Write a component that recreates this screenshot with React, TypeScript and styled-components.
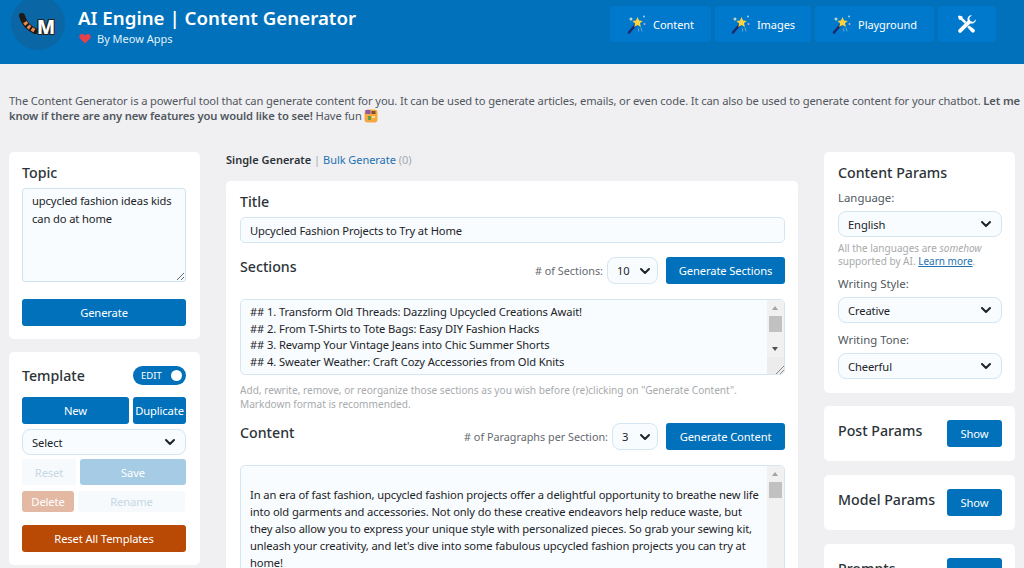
import { createGlobalStyle, styled } from "styled-components";

const GlobalStyle = createGlobalStyle`
  html, body {
    margin: 0;
    height: 568px;
    overflow: hidden;
    background: #f0f0f3;
    font-family: "Noto Sans", "Open Sans", sans-serif;
    font-size: 11.2px;
    letter-spacing: -0.12px;
    color: #1d2327;
  }
  * { box-sizing: border-box; }
`;

const Header = styled.header`
  height: 64px;
  background: #0071ba;
  display: flex;
  justify-content: space-between;
  padding: 0 28px 0 11px;
`;

const Brand = styled.div`
  display: flex;
  gap: 13px;
`;

const LogoCircle = styled.div`
  position: relative;
  width: 54px;
  height: 54px;
  margin-top: -4px;
  border-radius: 50%;
  background: #0a66a5;
  overflow: hidden;
`;

const LogoLetter = styled.span`
  position: absolute;
  left: 26px;
  top: 19px;
  font-size: 19px;
  font-weight: 800;
  line-height: 24px;
  letter-spacing: 0;
  color: #fff;
  text-shadow: 1px 1px 0 #222, -1px -1px 0 #222, 1px -1px 0 #222, -1px 1px 0 #222;
`;

const BrandText = styled.div`
  padding-top: 6px;
`;

const AppTitle = styled.h1`
  margin: 0;
  font-size: 18.7px;
  line-height: 23px;
  font-weight: 600;
  letter-spacing: 0;
  color: #fff;
`;

const Byline = styled.div`
  display: flex;
  align-items: center;
  gap: 6px;
  margin-top: 2px;
  padding-left: 1px;
  font-size: 11px;
  letter-spacing: 0;
  color: #e3f1fb;
`;

const Nav = styled.nav`
  display: flex;
  gap: 4px;
  padding-top: 6px;
`;

const NavButton = styled.button<{ $width: number }>`
  width: ${(p) => p.$width}px;
  height: 36px;
  border: 0;
  border-radius: 4px;
  background: #0079cc;
  color: #fff;
  font: inherit;
  font-size: 11px;
  letter-spacing: -0.05px;
  display: flex;
  align-items: center;
  justify-content: center;
  gap: 6px;
`;

const Intro = styled.p`
  margin: 0;
  padding: 29px 0 0 9px;
  height: 88px;
  line-height: 15px;
  color: #50575e;
  b {
    font-weight: 600;
  }
  svg {
    vertical-align: -3px;
  }
`;

const Columns = styled.main`
  display: grid;
  grid-template-columns: 191px 572px 191px;
  gap: 26px;
  padding-left: 9px;
`;

const Column = styled.div`
  display: flex;
  flex-direction: column;
  gap: 13px;
`;

const Card = styled.section`
  background: #fff;
  border-radius: 5px;
  padding: 12px 13px 13px 14px;
`;

const LeftCard = styled(Card)`
  padding: 12px 14px 13px 13px;
`;

const TemplateCard = styled(LeftCard)`
  padding-top: 14px;
`;

const ParamsCard = styled(Card)`
  padding-bottom: 14px;
`;

const CardTitle = styled.h2`
  margin: 0;
  font-size: 14.2px;
  line-height: 18px;
  font-weight: 500;
  letter-spacing: 0;
  color: #2c3338;
`;

const RaisedTitle = styled(CardTitle)`
  margin-top: -8px;
`;

const ParamsTitle = styled(CardTitle)`
  margin-bottom: 0;
`;

const Input = styled.div`
  height: 26px;
  border: 1px solid #d4e6f1;
  border-radius: 5px;
  background: #f8fcff;
  padding: 0 9px;
  display: flex;
  align-items: center;
  color: #1d2327;
`;

const SelectBox = styled(Input)<{ $width?: number }>`
  justify-content: space-between;
  border-radius: 8px;
  ${(p) => (p.$width ? `width: ${p.$width}px;` : "")}
`;

const Button = styled.button<{ $tone?: "primary" | "danger" }>`
  height: 27px;
  border: 0;
  border-radius: 3px;
  padding: 0;
  background: ${(p) => (p.$tone === "danger" ? "#b84a05" : "#0071ba")};
  color: #fff;
  font: inherit;
  letter-spacing: inherit;
`;

const TopicArea = styled.textarea`
  display: block;
  width: 164px;
  height: 94px;
  margin: 6px 0 17px;
  padding: 3px 9px;
  border: 1px solid #cfe3f0;
  border-radius: 3px;
  background: #f8fcff;
  font: inherit;
  letter-spacing: inherit;
  line-height: 18px;
  color: #1d2327;
  outline: 0;
`;

const WideButton = styled(Button)`
  display: block;
  width: 100%;
`;

const TemplateHead = styled.div`
  display: flex;
  justify-content: space-between;
  align-items: center;
  margin-bottom: 12px;
`;

const Toggle = styled.div`
  width: 53px;
  height: 19px;
  border-radius: 10px;
  background: #0071ba;
  color: #fff;
  font-size: 9.5px;
  letter-spacing: 0;
  display: flex;
  align-items: center;
  justify-content: space-between;
  padding: 0 4px 0 8px;
  &::after {
    content: "";
    width: 11px;
    height: 11px;
    border-radius: 50%;
    background: #fff;
  }
`;

const ButtonRow = styled.div<{ $columns: string; $after?: number }>`
  display: grid;
  grid-template-columns: ${(p) => p.$columns};
  gap: 4px;
  margin-bottom: ${(p) => p.$after ?? 5}px;
`;

const FadedButton = styled.button<{ $kind: "ghost" | "primary" | "danger"; $height?: number }>`
  height: ${(p) => p.$height ?? 26}px;
  border: 0;
  border-radius: 3px;
  padding: 0;
  font: inherit;
  letter-spacing: inherit;
  background: ${(p) =>
    p.$kind === "primary" ? "#a6cce5" : p.$kind === "danger" ? "#e4b9a3" : "#f6fafd"};
  color: ${(p) => (p.$kind === "ghost" ? "#c6d8e4" : "#fff")};
`;

const GenerateTabs = styled.div`
  height: 29px;
  font-size: 11px;
  letter-spacing: 0;
  line-height: 16px;
  color: #a7aaad;
  b {
    font-weight: 600;
    color: #2c3338;
  }
  a {
    color: #2271b1;
    letter-spacing: -0.05px;
  }
`;

const MainCard = styled(Card)`
  height: 420px;
  overflow: hidden;
`;

const SectionHead = styled.div`
  display: flex;
  align-items: center;
  justify-content: space-between;
  height: 27px;
`;

const Controls = styled.div`
  display: flex;
  align-items: center;
`;

const ControlLabel = styled.span`
  font-size: 10.8px;
  letter-spacing: 0;
  color: #646970;
  margin-right: 4px;
`;

const CompactSelect = styled(SelectBox)`
  height: 27px;
  margin-right: 8px;
  padding: 0 6px 0 9px;
`;

const ActionButton = styled(Button)`
  width: 119px;
`;

const TextPanel = styled.div<{ $height: number }>`
  position: relative;
  height: ${(p) => p.$height}px;
  border: 1px solid #d4e6f1;
  border-radius: 5px;
  background: #f8fcff;
  overflow: hidden;
`;

const PanelText = styled.div<{ $pad: string; $lh: number }>`
  padding: ${(p) => p.$pad};
  padding-right: 18px;
  line-height: ${(p) => p.$lh}px;
  color: #1d2327;
`;

const Scrollbar = styled.div`
  position: absolute;
  top: 0;
  right: 0;
  bottom: 0;
  width: 17px;
  background: #f1f1f1;
`;

const ScrollThumb = styled.div`
  position: absolute;
  top: 16px;
  left: 2px;
  width: 13px;
  height: 16px;
  background: #c1c1c1;
`;

const ScrollArrow = styled.div<{ $down?: boolean }>`
  position: absolute;
  left: 5px;
  ${(p) => (p.$down ? "bottom: 23px; border-top: 4px solid #505050;" : "top: 6px; border-bottom: 4px solid #a3a3a3;")}
  width: 0;
  height: 0;
  border-left: 3.5px solid transparent;
  border-right: 3.5px solid transparent;
`;

const ResizeCorner = styled.div`
  position: absolute;
  right: 0;
  bottom: 0;
  width: 17px;
  height: 17px;
  background: linear-gradient(135deg, #ececec 74%, #8a8a8a 74%, #8a8a8a 78%, #ececec 78%, #ececec 86%, #8a8a8a 86%, #8a8a8a 90%, #ececec 90%);
`;

const Help = styled.p`
  margin: 8px 0 12px;
  font-size: 10.1px;
  letter-spacing: 0;
  line-height: 14px;
  color: #a7aaad;
`;

const TitleInput = styled(Input)`
  margin: 6px 0 14px;
`;

const Spacer = styled.div<{ $height: number }>`
  height: ${(p) => p.$height}px;
`;

const FieldLabel = styled.div<{ $top: number }>`
  font-size: 11.4px;
  letter-spacing: 0;
  line-height: 16px;
  color: #50575e;
  margin: ${(p) => p.$top}px 0 5px;
`;

const SideNote = styled.p`
  margin: 5px 0 0;
  font-size: 10px;
  letter-spacing: 0;
  line-height: 13px;
  color: #a7aaad;
  a {
    color: #2271b1;
  }
`;

const ParamRow = styled(Card)`
  display: flex;
  align-items: center;
  justify-content: space-between;
  height: 55px;
  padding-top: 0;
  padding-bottom: 0;
  & + & {
    margin-top: 1px;
  }
  h2 {
    margin-top: -5px;
  }
`;

const ShowButton = styled(Button)`
  width: 55px;
`;

const Chevron = () => (
  <svg width="12" height="12" viewBox="0 0 12 12" fill="none" stroke="#1d2327" strokeWidth="2" strokeLinecap="round" strokeLinejoin="round">
    <path d="M2 4l4 4 4-4" />
  </svg>
);

const Wand = () => (
  <svg width="20" height="20" viewBox="0 0 20 20">
    <path d="M2 18.5L8 11.5" stroke="#1a2a6b" strokeWidth="2.6" strokeLinecap="round" />
    <path d="M10.5 3l1.6 3.5 3.7.4-2.800 2.400.9 3.700-3.400-2-3.300 2 .9-3.700L5.300 6.900 9 6.500z" fill="#fbd341" />
    <path d="M4 3l.7 1.600L6.300 5l-1.600.6L4 7.200 3.300 5.600 1.700 5l1.600-.4z" fill="#f7f3d0" />
    <circle cx="17" cy="2.5" r="1" fill="#8fd3f7" />
    <circle cx="17.5" cy="10" r="1" fill="#c9a7e8" />
    <path d="M14 14l1 3M11.5 15l.3 2" stroke="#6fa8d8" strokeWidth="1" strokeLinecap="round" />
  </svg>
);

const ToolsIcon = () => (
  <svg width="20" height="20" viewBox="0 0 20 20" fill="#fff">
    <path d="M14.8 1a4.400 4.400 0 0 0-4.200 5.700L1.700 15.600a1.900 1.900 0 0 0 2.700 2.700l8.900-8.900A4.400 4.400 0 0 0 19 5.200l-2.800 2.700-3-1-1-3L14.900 1z" />
    <path d="M2 1.600L1 2.600l.9 2.800 2 .5 3.700 3.700 1.800-1.800L5.700 4.100 5.200 2.200zM12.100 11.400l-1.800 1.800 4.200 4.900a1.900 1.900 0 0 0 2.800-2.800z" />
  </svg>
);

const Heart = () => (
  <svg width="12" height="11" viewBox="0 0 12 11">
    <path d="M6 10.500L1.200 5.800C-.6 3.900.5 1 3 1c1.300 0 2.300.7 3 1.700C6.700 1.700 7.700 1 9 1c2.500 0 3.600 2.900 1.800 4.800z" fill="#e8404a" />
  </svg>
);

const Palette = () => (
  <svg width="14" height="14" viewBox="0 0 14 14">
    <rect x="0.5" y="0.5" width="13" height="13" rx="3" fill="#f5a742" />
    <rect x="1.5" y="1" width="5" height="4" fill="#8a5bb0" />
    <rect x="7.5" y="2" width="4" height="3" fill="#7d4f2a" />
    <rect x="4" y="7" width="3" height="4" fill="#5f9e4f" />
    <rect x="8" y="7" width="3" height="2" fill="#ffe27a" />
  </svg>
);

const Tail = () => (
  <svg width="54" height="54" viewBox="0 0 54 54" fill="none">
    <path d="M11 20c2 7 6 12 13 15" stroke="#1e1a18" strokeWidth="6" strokeLinecap="round" />
    <path d="M14 26c2 4 5 6 10 9" stroke="#e98a4f" strokeWidth="4" strokeDasharray="3 2" />
  </svg>
);

const SideParam = ({ label, value, top }: { label: string; value: string; top: number }) => (
  <>
    <FieldLabel $top={top}>{label}</FieldLabel>
    <SelectBox>
      {value}
      <Chevron />
    </SelectBox>
  </>
);

const PanelScrollbar = ({ corner }: { corner?: boolean }) => (
  <Scrollbar>
    <ScrollArrow />
    <ScrollThumb />
    {corner && <ScrollArrow $down />}
    {corner && <ResizeCorner />}
  </Scrollbar>
);

const App = () => {
  return (
    <>
      <GlobalStyle />
      <Header>
        <Brand>
          <LogoCircle>
            <Tail />
            <LogoLetter>M</LogoLetter>
          </LogoCircle>
          <BrandText>
            <AppTitle>AI Engine | Content Generator</AppTitle>
            <Byline>
              <Heart />
              By Meow Apps
            </Byline>
          </BrandText>
        </Brand>
        <Nav>
          <NavButton $width={101}>
            <Wand />
            Content
          </NavButton>
          <NavButton $width={96}>
            <Wand />
            Images
          </NavButton>
          <NavButton $width={119}>
            <Wand />
            Playground
          </NavButton>
          <NavButton $width={58}>
            <ToolsIcon />
          </NavButton>
        </Nav>
      </Header>

      <Intro>
        The Content Generator is a powerful tool that can generate content for you. It can be used to generate articles, emails, or even code. It can also be used to generate content for your chatbot.{" "}
        <b>Let me know if there are any new features you would like to see!</b> Have fun <Palette />
      </Intro>

      <Columns>
        <Column>
          <LeftCard>
            <CardTitle>Topic</CardTitle>
            <TopicArea defaultValue="upcycled fashion ideas kids can do at home" />
            <WideButton>Generate</WideButton>
          </LeftCard>
          <TemplateCard>
            <TemplateHead>
              <CardTitle>Template</CardTitle>
              <Toggle>EDIT</Toggle>
            </TemplateHead>
            <ButtonRow $columns="107px 53px" $after={5}>
              <Button>New</Button>
              <Button>Duplicate</Button>
            </ButtonRow>
            <SelectBox>
              Select
              <Chevron />
            </SelectBox>
            <Spacer $height={4} />
            <ButtonRow $columns="54px 106px" $after={6}>
              <FadedButton $kind="ghost">Reset</FadedButton>
              <FadedButton $kind="primary">Save</FadedButton>
            </ButtonRow>
            <ButtonRow $columns="52px 107px" $after={13}>
              <FadedButton $kind="danger" $height={21}>Delete</FadedButton>
              <FadedButton $kind="ghost" $height={21}>Rename</FadedButton>
            </ButtonRow>
            <WideButton $tone="danger">Reset All Templates</WideButton>
          </TemplateCard>
        </Column>

        <div>
          <GenerateTabs>
            <b>Single Generate</b> | <a>Bulk Generate</a> (0)
          </GenerateTabs>
          <MainCard>
            <CardTitle>Title</CardTitle>
            <TitleInput>Upcycled Fashion Projects to Try at Home</TitleInput>
            <SectionHead>
              <RaisedTitle>Sections</RaisedTitle>
              <Controls>
                <ControlLabel># of Sections:</ControlLabel>
                <CompactSelect $width={51}>
                  10
                  <Chevron />
                </CompactSelect>
                <ActionButton>Generate Sections</ActionButton>
              </Controls>
            </SectionHead>
            <Spacer $height={15} />
            <TextPanel $height={76}>
              <PanelText $pad="4px 9px" $lh={16.5}>
                ## 1. Transform Old Threads: Dazzling Upcycled Creations Await!
                <br />
                ## 2. From T-Shirts to Tote Bags: Easy DIY Fashion Hacks
                <br />
                ## 3. Revamp Your Vintage Jeans into Chic Summer Shorts
                <br />
                ## 4. Sweater Weather: Craft Cozy Accessories from Old Knits
                <br />
                ## 5. Accessorize with Flair: Upcycled Jewelry and More
              </PanelText>
              <PanelScrollbar corner />
            </TextPanel>
            <Help>
              Add, rewrite, remove, or reorganize those sections as you wish before (re)clicking on "Generate Content".
              <br />
              Markdown format is recommended.
            </Help>
            <SectionHead>
              <RaisedTitle>Content</RaisedTitle>
              <Controls>
                <ControlLabel># of Paragraphs per Section:</ControlLabel>
                <CompactSelect $width={46}>
                  3
                  <Chevron />
                </CompactSelect>
                <ActionButton>Generate Content</ActionButton>
              </Controls>
            </SectionHead>
            <Spacer $height={15} />
            <TextPanel $height={160}>
              <PanelText $pad="20px 9px 0" $lh={17}>
                In an era of fast fashion, upcycled fashion projects offer a delightful opportunity to breathe new life into old garments and accessories. Not only do these creative endeavors help reduce waste, but they also allow you to express your unique style with personalized pieces. So grab your sewing kit, unleash your creativity, and let's dive into some fabulous upcycled fashion projects you can try at home!
              </PanelText>
              <PanelScrollbar />
            </TextPanel>
          </MainCard>
        </div>

        <Column>
          <ParamsCard>
            <ParamsTitle>Content Params</ParamsTitle>
            <SideParam label="Language:" value="English" top={8} />
            <SideNote>
              All the languages are <i>somehow</i> supported by AI. <a href="#learn">Learn more</a>.
            </SideNote>
            <SideParam label="Writing Style:" value="Creative" top={8} />
            <SideParam label="Writing Tone:" value="Cheerful" top={9} />
          </ParamsCard>
          <ParamRow>
            <CardTitle>Post Params</CardTitle>
            <ShowButton>Show</ShowButton>
          </ParamRow>
          <ParamRow>
            <CardTitle>Model Params</CardTitle>
            <ShowButton>Show</ShowButton>
          </ParamRow>
          <ParamRow>
            <CardTitle>Prompts</CardTitle>
            <ShowButton>Show</ShowButton>
          </ParamRow>
        </Column>
      </Columns>
    </>
  );
};

export default App;
